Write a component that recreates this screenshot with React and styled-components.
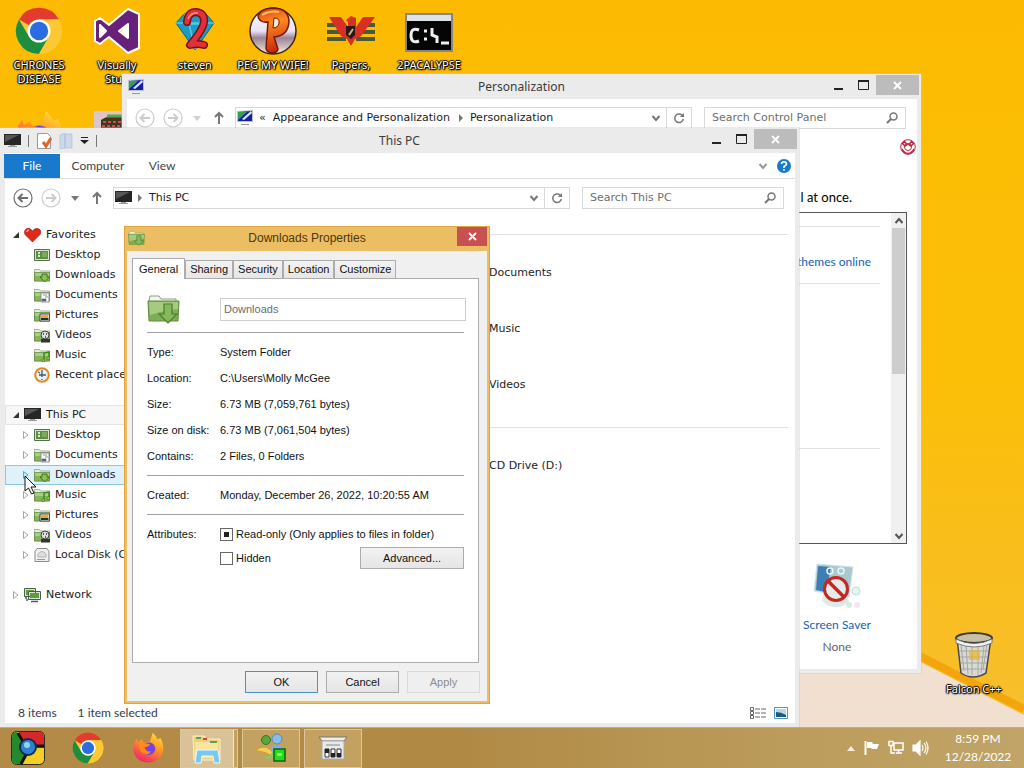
import React from 'react';
import styled, { createGlobalStyle } from 'styled-components';

const GlobalStyle = createGlobalStyle`
  * { box-sizing: border-box; }
  body { margin: 0; overflow: hidden; }
  button, input { font: inherit; color: inherit; }
  svg { display: block; flex: none; }
`;

const ui = '"DejaVu Sans", sans-serif';
const titleFont = '"Noto Sans", sans-serif';
const casual = 'Lato, sans-serif';
const dialogFont = '"Liberation Sans", sans-serif';

/* ---------- desktop ---------- */

const Screen = styled.div`
  position: relative;
  display: flex;
  flex-direction: column;
  height: 100vh;
  min-height: 740px;
  overflow: hidden;
  background: #fcbd02;
  font: 11px/20px ${ui};
  color: #1c1c1c;
`;
const Wallpaper = styled.svg`
  position: absolute;
  inset: 0;
  width: 100%;
  height: 100%;
`;
const Desktop = styled.main`
  position: relative;
  flex: 1;
`;
const Shortcuts = styled.div`
  display: grid;
  grid-template-columns: repeat(6, 78px);
  grid-auto-rows: 103px;
  padding-top: 7px;
`;
const Shortcut = styled.button`
  display: flex;
  flex-direction: column;
  align-items: center;
  gap: 3px;
  padding: 0;
  border: 0;
  background: none;
  color: #fff;
  font: 11px/14px ${titleFont};
  white-space: nowrap;
  text-shadow: 1px 1px 1px #000, 0 1px 2px #000, 1px 0 1px #000, -1px 0 1px #000, 0 -1px 1px #000;
  span { white-space: pre-line; }
`;
const Bin = styled(Shortcut)`
  position: absolute;
  right: 10px;
  bottom: 31px;
  width: 80px;
`;

/* ---------- window frame ---------- */

const Window = styled.section`
  position: absolute;
  display: flex;
  flex-direction: column;
  background: #ebebeb;
  box-shadow: 0 0 0 1px rgba(200, 200, 200, 0.4);
`;
const ControlPanel = styled(Window)`
  inset: 74px 103px 54px 122px;
`;
const Explorer = styled(Window)`
  inset: 128px 225px 0 0;
`;
const TitleBar = styled.header`
  display: grid;
  grid-template-columns: 1fr auto 1fr;
  height: 25px;
  h2 {
    margin: 0;
    font: 12px/25px ${titleFont};
    color: #3c3c3c;
  }
`;
const TitleTools = styled.div`
  display: flex;
  align-items: center;
  gap: ${(p) => p.$gap || 6}px;
  padding-left: ${(p) => p.$inset || 4}px;
`;
const TitleSplit = styled.span`
  width: 1px;
  height: 12px;
  background: #777;
`;
const Controls = styled.div`
  display: flex;
  justify-content: flex-end;
  align-items: flex-start;
  padding: 1px 2px 0 0;
`;
const ControlButton = styled.button`
  display: grid;
  place-items: center;
  width: ${(p) => (p.$close ? 43 : 25)}px;
  height: 20px;
  padding: 0;
  border: 0;
  background: ${(p) => (p.$close ? '#bcbcbc' : 'none')};
`;
const Client = styled.div`
  display: flex;
  flex-direction: column;
  flex: 1;
  min-height: 0;
  margin: 0 4px 4px 5px;
  background: #fff;
`;

/* ---------- navigation bar ---------- */

const Nav = styled.nav`
  display: flex;
  align-items: center;
  gap: 8px;
  padding: 8px 11px 8px 8px;
`;
const IconButton = styled.button`
  display: grid;
  place-items: center;
  width: ${(p) => p.$w || 20}px;
  height: 20px;
  padding: 0;
  border: 0;
  background: none;
`;
const Address = styled.div`
  display: flex;
  align-items: center;
  flex: 1;
  height: 22px;
  padding-left: 1px;
  border: 1px solid #d9d9d9;
  ol {
    display: flex;
    align-items: center;
    flex: 1;
    gap: 9px;
    margin: 0;
    padding: 0 0 0 6px;
    list-style: none;
  }
  li { display: flex; align-items: center; gap: 7px; }
`;
const Refresh = styled(IconButton)`
  width: 25px;
  border-left: 1px solid #d9d9d9;
`;
const Search = styled.label`
  display: flex;
  align-items: center;
  width: 202px;
  height: 22px;
  margin-left: 4px;
  padding: 0 7px;
  border: 1px solid #d9d9d9;
  input {
    flex: 1;
    min-width: 0;
    padding: 0;
    border: 0;
    outline: 0;
    background: none;
    &::placeholder { color: #6e6e6e; opacity: 1; }
  }
`;

/* ---------- control panel body ---------- */

const HelpRow = styled.div`
  display: flex;
  justify-content: flex-end;
  margin: 2px 1px 0 0;
`;
const Intro = styled.p`
  margin: 32px 65px 5px 0;
  text-align: right;
  font: 13px/20px ${casual};
  color: #000;
`;
const ThemeList = styled.div`
  display: flex;
  flex: 1;
  margin: 0 10px 19px 20px;
  border: 1px solid #555;
`;
const Themes = styled.div`
  flex: 1;
  padding: 13px 11px 0 0;
`;
const ThemeGroup = styled.div`
  height: ${(p) => p.$h}px;
  padding: 25px 9px 0 0;
  border-top: 1px solid #e2e2e2;
  text-align: right;
`;
const Link = styled.a`
  font: 12px/20px ${casual};
  color: #1264b4;
  text-decoration: none;
`;
const ScrollBar = styled.div`
  display: flex;
  flex-direction: column;
  align-items: center;
  width: 15px;
  background: #f0f0f0;
`;
const Thumb = styled.div`
  width: 13px;
  height: 146px;
  margin-bottom: auto;
  background: #cdcdcd;
`;
const Arrow = styled.div`
  display: grid;
  place-items: center;
  height: 15px;
`;
const Saver = styled.div`
  display: flex;
  flex-direction: column;
  align-items: center;
  align-self: flex-end;
  width: 100px;
  margin: 0 30px 12px 0;
  a { margin-top: 4px; }
  span { font: 12px/20px ${casual}; color: #666; margin-top: 2px; }
`;

/* ---------- explorer body ---------- */

const Ribbon = styled.div`
  display: flex;
  align-items: center;
  height: 26px;
  border-bottom: 1px solid #dcdcdc;
`;
const RibbonTab = styled.button`
  width: ${(p) => (p.$file ? 56 : 64)}px;
  height: 24px;
  margin-left: ${(p) => (p.$file ? -1 : 0)}px;
  padding: 0;
  border: 0;
  font: 12px/24px ${casual};
  background: ${(p) => (p.$file ? '#1979ca' : 'none')};
  color: ${(p) => (p.$file ? '#fff' : '#444')};
  &:nth-child(2) { margin-left: 6px; }
`;
const Spacer = styled.span`
  flex: 1;
`;
const Panes = styled.div`
  display: flex;
  flex: 1;
  min-height: 0;
`;
const Tree = styled.ul`
  width: 200px;
  margin: 0;
  padding: 8px 0 0;
  list-style: none;
`;
const Node = styled.li`
  display: flex;
  align-items: center;
  gap: 5px;
  height: 20px;
  margin-top: ${(p) => (p.$gap ? 20 : 0)}px;
  padding-left: ${(p) => (p.$child ? 17 : 7)}px;
  border: 1px solid ${(p) => (p.$hot ? '#8fc6e0' : p.$current ? '#e4e4e4' : 'transparent')};
  background: ${(p) => (p.$hot ? '#dff2fb' : p.$current ? '#f7f7f7' : 'none')};
  white-space: nowrap;
`;
const Files = styled.div`
  flex: 1;
  padding: 17px 7px 0 0;
`;
const FileGroup = styled.ul`
  margin: 0 0 14px;
  padding: 10px 0 0 284px;
  border-top: 1px solid #e2e2e2;
  list-style: none;
  li { line-height: 56px; white-space: nowrap; }
`;
const Status = styled.footer`
  display: flex;
  align-items: center;
  gap: 21px;
  height: 20px;
  padding: 0 4px 0 13px;
  font: 12px/20px ${casual};
  color: #333c4c;
`;
const Views = styled.div`
  display: flex;
  gap: 3px;
  margin-left: auto;
`;

/* ---------- properties dialog ---------- */

const Dialog = styled(Window)`
  left: 124px;
  top: 226px;
  width: 366px;
  height: 478px;
  padding: 0 3px 3px;
  background: #ebbe63;
  box-shadow: inset 0 0 0 1px #e0a53c;
  font: 11px/20px ${dialogFont};
  color: #111;
`;
const DialogBar = styled(TitleBar)`
  h2 {
    font: 12px/25px ${dialogFont};
    color: #50360a;
  }
`;
const DialogClose = styled.button`
  display: grid;
  place-items: center;
  justify-self: end;
  width: 30px;
  height: 19px;
  margin-top: 1px;
  padding: 0;
  border: 0;
  background: #c75050;
`;
const Sheet = styled.div`
  display: flex;
  flex-direction: column;
  flex: 1;
  padding: 7px 7px 8px 5px;
  background: #f0f0f0;
`;
const Tabs = styled.div`
  display: flex;
  align-items: flex-end;
  height: 20px;
`;
const Tab = styled.button`
  position: relative;
  height: ${(p) => (p.$active ? 21 : 18)}px;
  margin-bottom: ${(p) => (p.$active ? -1 : 0)}px;
  padding: 0 ${(p) => (p.$active ? 6 : 4)}px;
  border: 1px solid #acacac;
  border-bottom: 0;
  background: ${(p) => (p.$active ? '#fff' : 'linear-gradient(#f2f2f2, #e6e6e6)')};
  line-height: 17px;
  & + & { border-left-width: ${(p) => (p.$second ? 0 : 1)}px; }
`;
const Panel = styled.form`
  flex: 1;
  margin-right: 1px;
  padding: 14px 14px 0;
  border: 1px solid #acacac;
  background: #fff;
`;
const Row = styled.div`
  display: grid;
  grid-template-columns: 73px 1fr;
  align-items: center;
  min-height: 26px;
`;
const NameBox = styled.input`
  width: 100%;
  height: 23px;
  padding: 0 3px 2px;
  border: 1px solid #cfcfcf;
  outline: 0;
  background: #fff;
  color: #6d6d6d;
`;
const NameRow = styled(Row)`
  height: 33px;
  margin-right: -2px;
`;
const Rule = styled.hr`
  margin: 6px 0;
  border: 0;
  border-top: 1px solid #a0a0a0;
`;
const Attributes = styled.fieldset`
  display: grid;
  grid-template: 26px 22px / 73px 1fr auto;
  align-items: center;
  margin: 0;
  padding: 0;
  border: 0;
`;
const Check = styled.label`
  display: flex;
  align-items: center;
  gap: 3px;
  grid-column: ${(p) => p.$col};
  input {
    appearance: none;
    width: 13px;
    height: 13px;
    margin: 0;
    border: 1px solid #666;
    background: #fff;
  }
  input:checked {
    background: linear-gradient(#222, #222) center / 5px 5px no-repeat;
  }
`;
const PushButton = styled.button`
  width: ${(p) => p.$w || 73}px;
  height: 22px;
  padding: 0;
  border: 1px solid ${(p) => (p.$primary ? '#4a90d0' : '#acacac')};
  background: linear-gradient(#f2f2f2, #e5e5e5);
  line-height: 20px;
  &:disabled {
    border-color: #d9d9d9;
    background: #efefef;
    color: #8d8d8d;
  }
`;
const Actions = styled.div`
  display: flex;
  justify-content: flex-end;
  gap: 8px;
  margin-top: 8px;
`;

/* ---------- taskbar ---------- */

const Taskbar = styled.footer`
  position: relative;
  display: flex;
  align-items: center;
  height: 41px;
  padding-right: 11px;
  border-top: 1px solid #c8ac78;
  background: linear-gradient(90deg, #b48b46 0%, #b08a45 45%, #bb9b5a 75%, #c0a468 100%);
  color: #fff;
`;
const Pins = styled.div`
  display: flex;
  gap: 4px;
`;
const Task = styled.button`
  display: grid;
  place-items: center;
  width: ${(p) => (p.$open ? 58 : 56)}px;
  height: 39px;
  padding: ${(p) => (p.$active ? '0 4px 0 0' : 0)};
  border: ${(p) => (p.$open ? '1px solid #dcc79c' : 0)};
  background: ${(p) => (p.$active ? '#d9c298' : p.$open ? '#c2a161' : 'none')};
  box-shadow: ${(p) => (p.$active ? 'inset -3px 0 #c2a161, inset -4px 0 #f4e7cb' : 'none')};
`;
const Tray = styled.div`
  display: flex;
  align-items: center;
  gap: 8px;
  margin-left: auto;
`;
const Clock = styled.time`
  width: 70px;
  margin-left: 6px;
  text-align: center;
  font: 12px/18px ${casual};
`;

/* ---------- icons ---------- */

const Chrome = ({ size = 48 }) => (
  <svg width={size} height={size} viewBox="0 0 48 48">
    <circle cx="24" cy="24" r="23" fill="#fcc934" />
    <path d="M24 24L4 12.5A23 23 0 0 1 44 12.5H24z" fill="#e33b2e" />
    <path d="M4 12.5a23 23 0 0 0 20 34.5l10-17.3L14 29.500z" fill="#1e8e3e" />
    <path d="M24 12.500h20A23 23 0 0 1 24 47l10-17.500z" fill="#fcc934" />
    <circle cx="24" cy="24" r="11.500" fill="#fff" />
    <circle cx="24" cy="24" r="9.200" fill="#2b6de0" />
  </svg>
);

const VisualStudio = () => (
  <svg width="48" height="48" viewBox="0 0 48 48">
    <path fillRule="evenodd" d="M2 14l5-3 9 7L35 2l11 5v34l-11 5-19-16-9 7-5-3zM7 18v12l6-6zM35 17l-9 7 9 7z" fill="#68217a" stroke="#fff" strokeWidth="2" strokeLinejoin="round" />
    <path d="M8 20v8l4-4zM34 19l-6 5 6 5z" fill="#fff" />
  </svg>
);

const Steven = () => (
  <svg width="48" height="48" viewBox="0 0 48 48">
    <path d="M13 7h22l8 9-19 27L5 16z" fill="#199dc4" stroke="#086586" />
    <path d="M13 7l5 10h12l5-10M5 16h38M18 17l6 25 6-25" stroke="#5cc6da" fill="none" strokeWidth="1.500" />
    <path d="M16 15q1-10 9-10 9 1 8 10-1 8-14 23 7-2 14 0" fill="none" stroke="#7a1116" strokeWidth="8" strokeLinecap="round" strokeLinejoin="round" />
    <path d="M16 15q1-10 9-10 9 1 8 10-1 8-14 23 7-2 14 0" fill="none" stroke="#e0303a" strokeWidth="5" strokeLinecap="round" strokeLinejoin="round" />
    <path d="M17 12q3-7 10-6" fill="none" stroke="#ff8d8d" strokeWidth="1.500" />
  </svg>
);

const Peggle = () => (
  <svg width="48" height="48" viewBox="0 0 48 48">
    <defs>
      <linearGradient id="ball" x1="0" y1="0" x2="0" y2="1">
        <stop offset="0" stopColor="#fff" />
        <stop offset=".5" stopColor="#e9e2f2" />
        <stop offset=".65" stopColor="#9d8398" />
        <stop offset="1" stopColor="#f4f0d8" />
      </linearGradient>
      <linearGradient id="peg" x1=".2" y1="0" x2=".4" y2="1">
        <stop offset="0" stopColor="#e2401a" />
        <stop offset=".35" stopColor="#ff8a1c" />
        <stop offset="1" stopColor="#c5280c" />
      </linearGradient>
    </defs>
    <circle cx="24" cy="24" r="23" fill="url(#ball)" stroke="#3d241c" strokeWidth="1.500" />
    <path d="M9 9q2-7 14-8 17 0 17 14-1 14-15 15l4 12q-1 4-6 4-6-1-6-5l2-26q-9 1-10-6z" fill="url(#peg)" stroke="#74150b" strokeWidth="1.500" />
    <path d="M25 11q6 0 5 5-1 5-6 5z" fill="#fbe9d0" stroke="#74150b" />
    <path d="M13 8q8-5 17-3" fill="none" stroke="#ffc462" strokeWidth="2" />
  </svg>
);

const Papers = () => (
  <svg width="48" height="48" viewBox="0 0 48 48">
    <path d="M0 16h14v4H0zM0 23h17v4H0zM0 30h19v4H0zM34 16h14v4H34zM31 23h17v4H31zM29 30h19v4H29z" fill="#4b5938" />
    <path d="M2 10h12l7 10v-5l-2-2 5-4 5 2v9l7-10h12L34 29l-6 3-4 7-4-7-6-3z" fill="#d92f24" />
    <path d="M19 19h9v9l-4 4-5-4z" fill="#2a1818" />
    <path d="M22 28l4-6" stroke="#c9b68b" strokeWidth="2" />
  </svg>
);

const Prompt = () => (
  <svg width="48" height="48" viewBox="0 0 48 48">
    <path d="M1 7h46v37H1z" fill="#050505" stroke="#858585" strokeWidth="2" />
    <path d="M2 8h44v6H2z" fill="#dfe2e5" />
    <path d="M14 23q-8-3-8 5.500t8 5.500M19 24h3M19 32h3M27 21v7l5 2v6M36 36h8" fill="none" stroke="#eee" strokeWidth="3" />
  </svg>
);

const Firefox = ({ size = 48 }) => (
  <svg width={size} height={size} viewBox="0 0 48 48">
    <defs>
      <linearGradient id="fox" x1=".8" y1="0" x2=".3" y2="1">
        <stop offset="0" stopColor="#ffe23a" />
        <stop offset=".45" stopColor="#ff9322" />
        <stop offset="1" stopColor="#f0206e" />
      </linearGradient>
    </defs>
    <path d="M31 1q5 4 7 10l5-2q9 18-2 30Q27 51 11 42-1 33 3 16l4-6 2 5 6-4 2 5 10-2z" fill="url(#fox)" />
    <path d="M16 20q7-8 16-2 6 8 0 14-9 6-15-2l6-2q-7-3-7-8z" fill="#7543e0" />
    <path d="M9 15q6-2 10 2l8 1q-2 5-8 5 1 8 10 6-6 9-16 0" fill="#ff8a1e" />
  </svg>
);

const Portrait = () => (
  <svg width="48" height="48" viewBox="0 0 48 48">
    <path d="M1 1h46v46H1z" fill="#d9c7c9" />
    <path d="M8 10q14-9 28 0v14H8z" fill="#42351e" />
    <path d="M10 12h24M9 16h28" stroke="#c3505a" strokeWidth="2" strokeDasharray="3 2" />
    <path d="M14 6h18" stroke="#62a344" strokeWidth="3" />
    <path d="M12 18h20v20H12z" fill="#bb8756" />
  </svg>
);

const BinIcon = () => (
  <svg width="48" height="48" viewBox="0 0 48 48">
    <path d="M7 7l4 35q12 8 25 0l5-35z" fill="#d9d9d6" stroke="#4a4a48" strokeWidth="1.500" />
    <path d="M11 14l3 26M16 15l2 28M22 16v28M28 16v28M34 15l-3 27M37 13l-4 26M9 20h29M10 26h28M11 32h26M12 38h24" stroke="#8c8c88" opacity=".65" />
    <path d="M19 19h11v10H19z" fill="#e8b52e" opacity=".7" />
    <ellipse cx="24" cy="7" rx="18" ry="5" fill="#c8c0a4" stroke="#3b3b3b" strokeWidth="2" />
    <path d="M6 8q18 9 36 0v4q-18 8-36 0z" fill="#f2f2f2" stroke="#666" strokeWidth=".8" />
  </svg>
);

const Display = () => (
  <svg width="16" height="16" viewBox="0 0 16 16">
    <path d="M0 1l16-1v12H0z" fill="#b8c4ca" />
    <path d="M1 2l14-1v10H1z" fill="#1520a8" />
    <path d="M1 2h9L1 10z" fill="#31a052" />
    <path d="M5 9l9-8 1 2-8 7z" fill="#e9e9f2" />
    <path d="M4 14h8v1H4z" fill="#999" />
  </svg>
);

const Pc = () => (
  <svg width="17" height="16" viewBox="0 0 17 16">
    <path d="M0 1h17v11H0z" fill="#262626" />
    <path d="M1 2h14L1 9z" fill="#565656" />
    <path d="M6 12h5v1H6zM4 13h9v1H4z" fill="#9a9a9a" />
  </svg>
);

const Heart = () => (
  <svg width="17" height="16" viewBox="0 0 17 16">
    <path d="M8.500 15L1 7.500Q-.5 3 3 1.500 6.500.5 8.500 4q2-3.500 6-2.200Q18 3.500 16 7.500z" fill="#dd2a1b" stroke="#9c1a12" strokeWidth=".7" />
    <path d="M3 5q0-2 2-2" stroke="#ff9f8e" fill="none" strokeWidth="1.300" />
  </svg>
);

const overlays = {
  down: <path d="M8 7h5v3h2.500L10.500 15 6 10h2z" fill="#8cc152" stroke="#3c7527" />,
  doc: <g><path d="M7 6h8v9H7z" fill="#fff" stroke="#8a8f99" /><path d="M8 12h4v2H8zM9 8h4M11 10h3" fill="#456" stroke="#678" strokeWidth=".8" /></g>,
  pic: <g><path d="M6 7h9.500v7H6z" fill="#fff" stroke="#444" /><path d="M7 8h7.500v3H7z" fill="#f2a72a" /><path d="M7 11h7.500v2H7z" fill="#233" /></g>,
  video: <g><circle cx="11" cy="8" r="4" fill="#ddd" stroke="#444" /><path d="M9 7h1M12 7h1M11 10h1" stroke="#333" strokeWidth="1.500" /><path d="M7 12h9v3.500H7z" fill="#333" /></g>,
  note: <g><path d="M10 13V6l5-1v6" fill="none" stroke="#3f8a1c" strokeWidth="1.500" /><path d="M8 12h2.500v2.500H8zM13 10h2.500v2.500H13z" fill="#9bd24d" stroke="#3f8a1c" strokeWidth=".7" /></g>,
};

const Folder = ({ kind }) => (
  <svg width="16" height="16" viewBox="0 0 16 16">
    <path d="M.5 14V2.500h5l1 1.500h9v10z" fill="#e8eede" stroke="#8b9a7c" strokeWidth=".7" />
    <path d="M.5 5.500h15V14H.5z" fill="#86b45b" stroke="#5e8741" strokeWidth=".7" />
    <path d="M1 6h14v3H1z" fill="#a8ce80" />
    {overlays[kind]}
  </svg>
);

const BigFolder = ({ size = 33 }) => (
  <svg width={size} height={size} viewBox="0 0 33 33">
    <path d="M2 8l1-5h9l2 3h15v4H2z" fill="#f3f6ef" stroke="#8ea07e" />
    <path d="M1 8h31l-1 20H2z" fill="#7fae52" stroke="#648c43" />
    <path d="M2 9h29v7q-12 1-28 6z" fill="#a5cb80" />
    <path d="M17 11h8v10h5l-9 9-9-9h5z" fill="#86b95a" stroke="#4c7c30" strokeWidth="1.200" />
  </svg>
);

const DesktopIcon = () => (
  <svg width="16" height="16" viewBox="0 0 16 16">
    <path d="M.5 2.500h15v11H.5z" fill="#dbe6cf" stroke="#55704a" />
    <path d="M2 4h12v8H2z" fill="#5e8c45" />
    <path d="M4 5h2v2H4zM4 8h2v2H4z" fill="#e0eecb" />
    <path d="M8 5h5v5H8z" fill="#7cab5c" />
  </svg>
);

const Recent = () => (
  <svg width="16" height="16" viewBox="0 0 16 16">
    <circle cx="8" cy="8" r="6.800" fill="#e5f1fa" stroke="#e08a1f" strokeWidth="2" />
    <path d="M8 3v7M5 8h7M4 5l2 1M8 12v1" stroke="#45566d" strokeWidth="1.300" />
  </svg>
);

const Disk = () => (
  <svg width="16" height="16" viewBox="0 0 16 16">
    <path d="M3 1.500h10l2 3v10H1v-10z" fill="#efefef" stroke="#8b8b8b" />
    <path d="M4 10V7q4-5 8 0v3z" fill="#dcdfe2" stroke="#b5b5b5" />
    <path d="M3 12.500h8" stroke="#999" />
  </svg>
);

const Network = () => (
  <svg width="17" height="16" viewBox="0 0 17 16">
    <path d="M.5 1.500h11v8H.5zM4.500 4.500h12v8h-12z" fill="#dce6d4" stroke="#4b5d45" />
    <path d="M2 3h8v1H4v4H2zM6 6h9v5H6z" fill="#5f9b3f" />
    <path d="M7 14.500h7M1 11h2M2 13h2" stroke="#4d5d6d" strokeWidth="1.300" />
  </svg>
);

const nodeIcons = {
  heart: <Heart />, pc: <Pc />, desktop: <DesktopIcon />, recent: <Recent />, disk: <Disk />, network: <Network />,
};

const Twisty = ({ open, hot }) => (
  <svg width="6" height="8" viewBox="0 0 6 8">
    {open
      ? <path d="M6 1v6H0z" fill="#333" />
      : <path d="M.5.500L5 4 .5 7.500z" fill={hot ? '#c9ecfb' : '#fff'} stroke={hot ? '#37b4e2' : '#a6a6a6'} />}
  </svg>
);

const Circled = ({ dim, flip }) => (
  <svg width="20" height="20" viewBox="0 0 20 20" fill="none" stroke={dim ? '#cccccc' : '#6f6f6f'}>
    <circle cx="10" cy="10" r="9" strokeWidth="1.200" />
    <path d={flip ? 'M5 10h9M10.500 6l4 4-4 4' : 'M15 10H6M9.500 6l-4 4 4 4'} strokeWidth="2" />
  </svg>
);

const UpArrow = () => (
  <svg width="12" height="14" viewBox="0 0 12 14" fill="none" stroke="#777" strokeWidth="2">
    <path d="M6 13V2M2 6l4-4 4 4" />
  </svg>
);

const Chevron = ({ up, color = '#555' }) => (
  <svg width="10" height="8" viewBox="0 0 10 8" fill="none" stroke={color} strokeWidth="2">
    <path d={up ? 'M1.500 6L5 2l3.500 4' : 'M1.500 2L5 6l3.500-4'} />
  </svg>
);

const Crumb = () => (
  <svg width="4" height="8" viewBox="0 0 4 8"><path d="M0 0l4 4-4 4z" fill="#777" /></svg>
);

const Reload = () => (
  <svg width="12" height="12" viewBox="0 0 12 12" fill="none" stroke="#777" strokeWidth="1.500">
    <path d="M10 4.500A4.300 4.300 0 1 0 10.300 7" />
    <path d="M11 1v4H7z" fill="#777" stroke="none" />
  </svg>
);

const Lens = () => (
  <svg width="12" height="12" viewBox="0 0 12 12" fill="none" stroke="#777">
    <circle cx="7.500" cy="4.500" r="3.500" strokeWidth="1.500" />
    <path d="M5 7L1 11" strokeWidth="2" />
  </svg>
);

const Cross = () => (
  <svg width="9" height="9" viewBox="0 0 9 9" stroke="#fff" strokeWidth="1.800"><path d="M1 1l7 7M8 1L1 8" /></svg>
);

const Lifebuoy = () => (
  <svg width="16" height="16" viewBox="0 0 16 16" fill="none" stroke="#c02440">
    <circle cx="8" cy="8" r="7.300" fill="#fff" />
    <circle cx="8" cy="8" r="3.500" />
    <path d="M2.500 4.500l2-2 2.500 3-2 1.500zM13.500 4.500l-2-2L9 5.500 11 7zM2 10q2 4 6 4.500Q12 14 14 10" strokeWidth="1.600" />
  </svg>
);

const SaverIcon = () => (
  <svg width="48" height="48" viewBox="0 0 48 48">
    <path d="M4 1l36 3-4 30L1 28z" fill="#a9c9cf" stroke="#d5e5ea" />
    <path d="M5 3l13 1-5 25-10-2z" fill="#3d7fb5" />
    <circle cx="17" cy="8" r="3" fill="none" stroke="#e8f7f7" strokeWidth="1.500" />
    <circle cx="28" cy="8" r="3" fill="none" stroke="#e8f7f7" strokeWidth="1.500" />
    <path d="M9 38q13 12 27 1l-2-8H10z" fill="#dfe9e8" />
    <circle cx="43" cy="28" r="4" fill="#e5f6ef" stroke="#b6dfe2" />
    <circle cx="36" cy="42" r="3" fill="#d2efe0" />
    <circle cx="44" cy="42" r="3" fill="#efe7f5" />
    <circle cx="23" cy="26" r="11.500" fill="#e6eae8" stroke="#c5281f" strokeWidth="3" />
    <path d="M15 18l16 16" stroke="#c5281f" strokeWidth="3.500" />
  </svg>
);

const Libraries = () => (
  <svg width="32" height="32" viewBox="0 0 32 32">
    <path d="M2 4h11l2 3h14v21H3z" fill="#f0cf78" stroke="#fff3c6" />
    <path d="M4 10h23v16H4z" fill="#f9e59f" />
    <path d="M5 5h5v2H5zM19 9h7v2h-7z" fill="#5b9d65" />
    <path d="M12 6h4v2h-4z" fill="#d4473e" />
    <path d="M4 31l2-13h21l2 13h-6l-1-7H11l-1 7z" fill="#7ac8ea" stroke="#e8f8ff" />
  </svg>
);

const Users = () => (
  <svg width="32" height="32" viewBox="0 0 32 32">
    <circle cx="11" cy="8" r="4.500" fill="#56a83a" stroke="#37761f" />
    <circle cx="22" cy="7" r="5" fill="#8dbbe8" stroke="#5a87b5" />
    <path d="M15 22q0-9 7-9t8 9z" fill="#7fb1e2" />
    <path d="M2 17q10-6 18 6v4Q14 20 2 19z" fill="#f5cf55" stroke="#d29a2a" />
    <path d="M4 23q10 7 16-8l4 3q-7 15-20 5z" fill="#8cc763" />
    <path d="M19 17h11v12H19z" fill="#25dc19" stroke="#0e6312" strokeWidth="1.500" />
    <path d="M22 21h5v3h-5z" fill="#76f468" />
  </svg>
);

const SwitchBoard = () => (
  <svg width="32" height="32" viewBox="0 0 32 32">
    <path d="M2 5h28l-3 4H5z" fill="#eee" stroke="#777" />
    <path d="M5 9h22v18H5z" fill="#e9e9e9" stroke="#aaa" />
    <path d="M8 17h4v8H8zM14 17h4v8h-4zM20 17h4v8h-4z" fill="#fff" stroke="#333" />
    <path d="M8 17h4v4H8zM14 21h4v4h-4zM20 21h4v4h-4z" fill="#222" />
    <path d="M9 13h14" stroke="#888" />
  </svg>
);

const ChromeSquare = () => (
  <svg width="34" height="34" viewBox="0 0 34 34">
    <rect x=".5" y=".5" width="33" height="33" rx="5" fill="#f4cf25" stroke="#2b2b18" />
    <path d="M1 5q0-4 5-4l11 16-7 16H5q-4 0-4-4z" fill="#238a2e" />
    <path d="M8 1h21q4 0 4 5v11H17z" fill="#d9262c" />
    <path d="M7 2l7 12M33 15H20M17 20l-7 13" stroke="#111" strokeWidth="3" />
    <circle cx="17" cy="16" r="9" fill="#122c4a" />
    <circle cx="17" cy="16" r="7" fill="#2d83d0" />
    <circle cx="16" cy="14" r="3" fill="#92d0f6" />
  </svg>
);

const Pointer = styled.svg`
  position: absolute;
  left: 24px;
  top: 475px;
`;

/* ---------- data ---------- */

const shortcuts = [
  ['CHRONES\nDISEASE', <Chrome />],
  ['Visually\nStup', <VisualStudio />],
  ['steven', <Steven />],
  ['PEG MY WIFE!', <Peggle />],
  ['Papers,', <Papers />],
  ['2PACALYPSE', <Prompt />],
  ['', <Firefox />],
  ['', <Portrait />],
];

const tree = [
  { text: 'Favorites', icon: 'heart', open: true },
  { text: 'Desktop', icon: 'desktop', child: true, leaf: true },
  { text: 'Downloads', folder: 'down', child: true, leaf: true },
  { text: 'Documents', folder: 'doc', child: true, leaf: true },
  { text: 'Pictures', folder: 'pic', child: true, leaf: true },
  { text: 'Videos', folder: 'video', child: true, leaf: true },
  { text: 'Music', folder: 'note', child: true, leaf: true },
  { text: 'Recent places', icon: 'recent', child: true, leaf: true },
  { text: 'This PC', icon: 'pc', open: true, gap: true, current: true },
  { text: 'Desktop', icon: 'desktop', child: true },
  { text: 'Documents', folder: 'doc', child: true },
  { text: 'Downloads', folder: 'down', child: true, hot: true },
  { text: 'Music', folder: 'note', child: true },
  { text: 'Pictures', folder: 'pic', child: true },
  { text: 'Videos', folder: 'video', child: true },
  { text: 'Local Disk (C:)', icon: 'disk', child: true },
  { text: 'Network', icon: 'network', gap: true },
];

const details = [
  ['Type:', 'System Folder'],
  ['Location:', 'C:\\Users\\Molly McGee'],
  ['Size:', '6.73 MB (7,059,761 bytes)'],
  ['Size on disk:', '6.73 MB (7,061,504 bytes)'],
  ['Contains:', '2 Files, 0 Folders'],
];

/* ---------- parts ---------- */

function WindowControls() {
  return (
    <Controls>
      <ControlButton aria-label="Minimize">
        <svg width="11" height="11"><path d="M1 8h9v2H1z" fill="#222" /></svg>
      </ControlButton>
      <ControlButton aria-label="Maximize">
        <svg width="11" height="11"><path d="M.5 1.500h10v8H.5z" fill="none" stroke="#222" /><path d="M0 0h11v2H0z" fill="#222" /></svg>
      </ControlButton>
      <ControlButton $close aria-label="Close"><Cross /></ControlButton>
    </Controls>
  );
}

function NavBar({ icon, path, prefix, placeholder, dimBack }) {
  return (
    <Nav>
      <IconButton aria-label="Back"><Circled dim={dimBack} /></IconButton>
      <IconButton aria-label="Forward"><Circled dim flip /></IconButton>
      <IconButton $w={12} aria-label="Recent locations">
        <svg width="8" height="5"><path d="M0 0h8L4 5z" fill={dimBack ? '#d0d0d0' : '#777'} /></svg>
      </IconButton>
      <IconButton $w={16} aria-label="Up"><UpArrow /></IconButton>
      <Address>
        {icon}
        <ol>
          {path.map((name, i) => (
            <li key={name}>{prefix && i === 0 ? <span>«</span> : <Crumb />}{name}</li>
          ))}
        </ol>
        <IconButton aria-label="Previous locations"><Chevron color="#777" /></IconButton>
        <Refresh aria-label="Refresh"><Reload /></Refresh>
      </Address>
      <Search>
        <input type="text" placeholder={placeholder} aria-label={placeholder} />
        <Lens />
      </Search>
    </Nav>
  );
}

function Personalization() {
  return (
    <ControlPanel>
      <TitleBar>
        <TitleTools $inset={6}><Display /></TitleTools>
        <h2>Personalization</h2>
        <WindowControls />
      </TitleBar>
      <Client>
        <NavBar icon={<Display />} prefix dimBack path={['Appearance and Personalization', 'Personalization']} placeholder="Search Control Panel" />
        <HelpRow><Lifebuoy /></HelpRow>
        <Intro>l at once.</Intro>
        <ThemeList>
          <Themes>
            <ThemeGroup $h={57}><Link href="#themes">themes online</Link></ThemeGroup>
            <ThemeGroup $h={165} />
            <ThemeGroup $h={20} />
          </Themes>
          <ScrollBar>
            <Arrow><Chevron up /></Arrow>
            <Thumb />
            <Arrow><Chevron /></Arrow>
          </ScrollBar>
        </ThemeList>
        <Saver>
          <SaverIcon />
          <Link href="#saver">Screen Saver</Link>
          <span>None</span>
        </Saver>
      </Client>
    </ControlPanel>
  );
}

function ThisPc() {
  return (
    <Explorer>
      <TitleBar>
        <TitleTools $gap={7}>
          <Pc />
          <TitleSplit />
          <svg width="16" height="16" viewBox="0 0 16 16">
            <path d="M1.500.5h10l3 3v12h-13z" fill="#fff" stroke="#999" />
            <path d="M7 9l3 4 5-8" fill="none" stroke="#e0662b" strokeWidth="3" />
          </svg>
          <svg width="14" height="16" viewBox="0 0 14 16">
            <path d="M1 2l5-2v15l-5 1zM6 1h7v14H6z" fill="#ccd9ea" stroke="#aebfd6" strokeWidth=".7" />
          </svg>
          <svg width="9" height="8"><path d="M1 0h7v1H1zM0 3h9L4.500 7z" fill="#222" /></svg>
          <TitleSplit />
        </TitleTools>
        <h2>This PC</h2>
        <WindowControls />
      </TitleBar>
      <Client>
        <Ribbon>
          <RibbonTab $file>File</RibbonTab>
          <RibbonTab>Computer</RibbonTab>
          <RibbonTab>View</RibbonTab>
          <Spacer />
          <IconButton aria-label="Expand ribbon"><Chevron color="#999" /></IconButton>
          <IconButton $w={22} aria-label="Help">
            <svg width="14" height="14" viewBox="0 0 14 14">
              <circle cx="7" cy="7" r="7" fill="#1979ca" />
              <path d="M4.500 5q0-2.300 2.500-2.300T9.500 5Q9.500 6.300 7 7.500V9M7 10v1.800" fill="none" stroke="#fff" strokeWidth="1.600" />
            </svg>
          </IconButton>
        </Ribbon>
        <NavBar icon={<Pc />} path={['This PC']} placeholder="Search This PC" />
        <Panes>
          <Tree>
            {tree.map((n, i) => (
              <Node key={i} $child={n.child} $gap={n.gap} $hot={n.hot} $current={n.current}>
                {n.leaf ? <svg width="6" height="8" /> : <Twisty open={n.open} hot={n.hot} />}
                {n.folder ? <Folder kind={n.folder} /> : nodeIcons[n.icon]}
                <span>{n.text}</span>
              </Node>
            ))}
          </Tree>
          <Files>
            <FileGroup><li>Documents</li><li>Music</li><li>Videos</li></FileGroup>
            <FileGroup><li>CD Drive (D:)</li></FileGroup>
          </Files>
        </Panes>
        <Status>
          <span>8 items</span>
          <span>1 item selected</span>
          <Views>
            <IconButton aria-label="Details">
              <svg width="16" height="12" viewBox="0 0 16 12" stroke="#666" fill="none">
                <path d="M.5.500h3v3h-3zM.5 4.500h3v3h-3zM.5 8.500h3v3h-3zM5 2h5M11 2h5M5 6h5M11 6h5M5 10h5M11 10h5" />
              </svg>
            </IconButton>
            <IconButton aria-label="Large icons">
              <svg width="14" height="12" viewBox="0 0 14 12">
                <path d="M.5.500h13v11H.5z" fill="#fff" stroke="#4b9bc0" />
                <path d="M2 2h10v8H2z" fill="#b4d9ea" /><path d="M2 5q5 0 10 3v2H2z" fill="#245878" />
              </svg>
            </IconButton>
          </Views>
        </Status>
      </Client>
    </Explorer>
  );
}

function Properties() {
  return (
    <Dialog role="dialog" aria-label="Downloads Properties">
      <DialogBar>
        <TitleTools $inset={1}><BigFolder size={17} /></TitleTools>
        <h2>Downloads Properties</h2>
        <DialogClose aria-label="Close"><Cross /></DialogClose>
      </DialogBar>
      <Sheet>
        <Tabs>
          <Tab $active>General</Tab>
          <Tab $second>Sharing</Tab>
          <Tab>Security</Tab>
          <Tab>Location</Tab>
          <Tab>Customize</Tab>
        </Tabs>
        <Panel>
          <NameRow>
            <BigFolder />
            <NameBox type="text" defaultValue="Downloads" aria-label="Name" />
          </NameRow>
          <Rule />
          {details.map(([label, value]) => (
            <Row key={label}><span>{label}</span><span>{value}</span></Row>
          ))}
          <Rule />
          <Row><span>Created:</span><span>Monday, December 26, 2022, 10:20:55 AM</span></Row>
          <Rule />
          <Attributes aria-label="Attributes">
            <span>Attributes:</span>
            <Check $col="2 / 4"><input type="checkbox" defaultChecked />Read-only (Only applies to files in folder)</Check>
            <Check $col="2"><input type="checkbox" />Hidden</Check>
            <PushButton type="button" $w={104}>Advanced...</PushButton>
          </Attributes>
        </Panel>
        <Actions>
          <PushButton $primary>OK</PushButton>
          <PushButton>Cancel</PushButton>
          <PushButton disabled>Apply</PushButton>
        </Actions>
      </Sheet>
    </Dialog>
  );
}

export default function App() {
  return (
    <Screen>
      <GlobalStyle />
      <Wallpaper viewBox="0 0 1024 768" preserveAspectRatio="none">
        <defs>
          <linearGradient id="petal" x1="0" y1="0" x2="0" y2="1">
            <stop offset="0" stopColor="#fcbb02" />
            <stop offset=".5" stopColor="#fbbf08" />
            <stop offset="1" stopColor="#f7be34" />
          </linearGradient>
        </defs>
        <path d="M0 0h1024v768H0z" fill="url(#petal)" />
        <path d="M780 590L1024 715v53H780z" fill="#f1dfd0" />
        <path d="M780 585L1024 709" stroke="#f2a50c" strokeWidth="8" />
      </Wallpaper>
      <Desktop>
        <Shortcuts>
          {shortcuts.map(([name, icon], i) => (
            <Shortcut key={i}>{icon}<span>{name}</span></Shortcut>
          ))}
        </Shortcuts>
        <Bin><BinIcon /><span>Falcon C++</span></Bin>
        <Personalization />
        <ThisPc />
        <Properties />
        <Pointer width="13" height="20" viewBox="0 0 13 20">
          <path d="M1 1v15l3.500-3 3 6 2.500-1-3-6h5z" fill="#fff" stroke="#111" />
        </Pointer>
      </Desktop>
      <Taskbar>
        <Pins>
          <Task aria-label="Browser"><ChromeSquare /></Task>
          <Task aria-label="Chrome"><Chrome size={32} /></Task>
          <Task aria-label="Firefox"><Firefox size={32} /></Task>
          <Task $open $active aria-label="File Explorer"><Libraries /></Task>
          <Task $open aria-label="Users"><Users /></Task>
          <Task $open aria-label="Switches"><SwitchBoard /></Task>
        </Pins>
        <Tray>
          <svg width="8" height="5"><path d="M0 5h8L4 0z" fill="#fbe9dc" /></svg>
          <svg width="17" height="16" viewBox="0 0 17 16">
            <path d="M2.500 1v14" stroke="#fff" strokeWidth="2" />
            <path d="M4 2h5l1 2h6l-2 5H9L8 8H4z" fill="#fff" />
          </svg>
          <svg width="16" height="16" viewBox="0 0 16 16" fill="none" stroke="#fff" strokeWidth="1.500">
            <path d="M6 3h9v7H6zM8 13h6M10.500 10v3M1 1.500h4v4H1zM3 5v8h4" />
          </svg>
          <svg width="17" height="16" viewBox="0 0 17 16" fill="none" stroke="#fff" strokeWidth="1.200">
            <path d="M1 5h3l4-4v14l-4-4H1z" fill="#fff" />
            <path d="M10 5q2 3 0 6M12 3q4 5 0 10M14 1.500q4 6.500 0 13" />
          </svg>
          <Clock>8:59 PM<br />12/28/2022</Clock>
        </Tray>
      </Taskbar>
    </Screen>
  );
}
